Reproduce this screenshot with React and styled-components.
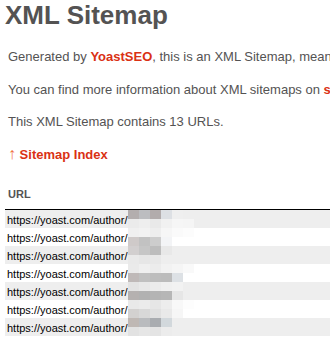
import React from "react";
import styled, { createGlobalStyle } from "styled-components";

const GlobalStyle = createGlobalStyle`
  html, body {
    margin: 0;
    overflow: hidden;
    background: #fff;
  }
  body {
    font-family: "Liberation Sans", Arial, Helvetica, sans-serif;
    font-size: 13px;
    color: #545353;
  }
`;

// redacted author names: two rows of six pixel blocks per url
const rows = [
  ["#b3aeae", "#bcbdc0", "#b2acac", "#dde0e4", "#efefef", "#eeeeee",
   "#ebebeb", "#eeeeee", "#e9e9e9", "#f1f1f1", "#f6f6f6", "#f5f5f5"],
  ["#f0f0f0", "#f2f2f2", "#eeeeee", "#f6f6f6", "#fafafa", "#fcfcfc",
   "#cfcac9", "#c2c2c2", "#cdcdcd", "#f3f4f6", "#ffffff", "#ffffff"],
  ["#d2cfcf", "#c6c6c6", "#bdbdbd", "#e8e8e8", "#eeeeee", "#eeeeee",
   "#e9e9e9", "#e6e6e6", "#e8e8e8", "#eeeeee", "#eeeeee", "#eeeeee"],
  ["#eaeaea", "#efefef", "#ececec", "#f2f2f2", "#f5f5f5", "#f9f9f9",
   "#bfb9b8", "#c0c0c0", "#bdbdbd", "#bcbcbc", "#dde1e5", "#ffffff"],
  ["#e3e3e3", "#e8e8e8", "#ececec", "#f0f0f0", "#f2f2f2", "#eeeeee",
   "#b5b1b0", "#b1b1b1", "#b4b4b4", "#b6b6b6", "#e6e6e6", "#eeeeee"],
  ["#e9e9e9", "#ebebeb", "#e6e6e6", "#ededed", "#f8f8f8", "#fdfdfd",
   "#d3d1d0", "#d8d8d8", "#e0e0e0", "#e9e9e9", "#f6f6f6", "#ffffff"],
  ["#bfb8b4", "#b9bbbe", "#a9acb0", "#d2d8dc", "#eeeeee", "#eeeeee",
   "#e2e2e2", "#e6e6e6", "#e4e4e4", "#ececec", "#eeeeee", "#eeeeee"],
];

export default function App() {
  return (
    <>
      <GlobalStyle />
      <Content>
        <Title>XML Sitemap</Title>
        <Expl>
          Generated by <RedLink href="#">YoastSEO</RedLink>, this is an XML
          Sitemap, meant for consumption by search engines.
        </Expl>
        <Expl>
          You can find more information about XML sitemaps on{" "}
          <RedLink href="#">sitemaps.org</RedLink>.
        </Expl>
        <Expl>This XML Sitemap contains 13 URLs.</Expl>
        <Expl>
          <RedLink href="#">
            <Arrow>↑</Arrow> Sitemap Index
          </RedLink>
        </Expl>

        <Table>
          <thead>
            <tr>
              <Th>URL</Th>
            </tr>
          </thead>
          <tbody>
            {rows.map((colors, i) => (
              <Row key={i}>
                <Td>
                  <Line>
                    <UrlLink href="#">https://yoast.com/author/</UrlLink>
                    <Mosaic>
                      {colors.map((c, j) => (
                        <Block key={j} $c={c} />
                      ))}
                    </Mosaic>
                  </Line>
                </Td>
              </Row>
            ))}
          </tbody>
        </Table>
      </Content>
    </>
  );
}

const Content = styled.div`
  width: 1000px;
  padding-left: 5px;
`;

const Title = styled.h1`
  margin: 0 0 19px;
  font-size: 26px;
  line-height: 30px;
  font-weight: bold;
  color: #545353;
`;

const Expl = styled.p`
  margin: 17px 3px;
  line-height: 1.2em;
`;

const RedLink = styled.a`
  color: #da3114;
  font-weight: bold;
  text-decoration: none;
`;

const Arrow = styled.span`
  font-size: 16px;
  line-height: 0;
  font-weight: normal;
  color: #f0723f;
`;

const Table = styled.table`
  width: 1000px;
  border: none;
  border-collapse: collapse;
`;

const Th = styled.th`
  text-align: left;
  font-size: 11px;
  line-height: 13px;
  padding: 9px 30px 8px 3px;
  border-bottom: 1px solid #000;
  color: #545353;
`;

const Row = styled.tr`
  &:nth-child(odd) td {
    background-color: #eee;
  }
`;

const Td = styled.td`
  padding: 0;
  font-size: 11px;
`;

const Line = styled.div`
  display: flex;
  align-items: center;
  height: 18px;
  padding-left: 2px;
`;

const UrlLink = styled.a`
  color: #000;
  text-decoration: none;
  line-height: 12px;
  padding-top: 1px;
`;

const Mosaic = styled.div`
  align-self: stretch;
  display: grid;
  grid-template-columns: repeat(6, 11px);
  grid-template-rows: 9px 9px;
  margin-left: 1px;
`;

const Block = styled.span`
  background: ${(p) => p.$c};
`;
